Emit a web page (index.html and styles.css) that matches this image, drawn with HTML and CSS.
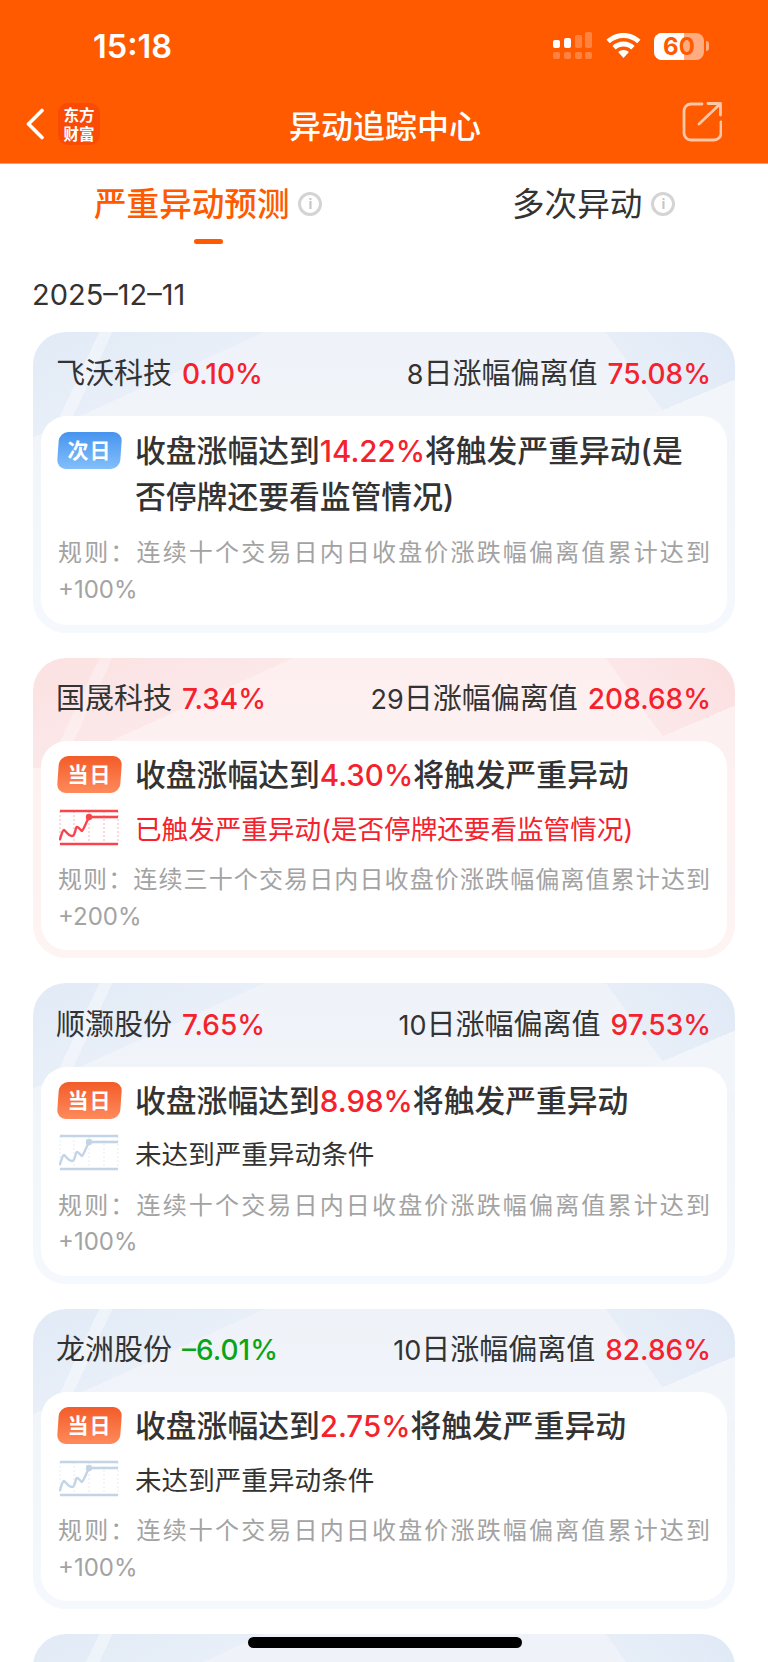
FILE: index.html
```html
<!DOCTYPE html>
<html lang="zh-CN">
<head>
    <meta charset="UTF-8">
    <title>异动追踪中心</title>
    <link rel="stylesheet" href="styles.css">
</head>
<body>
    <div id="page">
        <div id="top">
            <div class="status">
                <span class="time">15:18</span>
                <div class="status-icons">
                    <svg class="signal" width="40" height="28" viewBox="0 0 40 28">
                        <g fill="#fff">
                            <rect x="0" y="8" width="7" height="8" rx="2"/>
                            <rect x="11" y="6" width="7" height="10" rx="2"/>
                        </g>
                        <g fill="#fff" opacity=".25">
                            <rect x="22" y="3" width="7" height="13" rx="2"/>
                            <rect x="32" y="0" width="7" height="16" rx="2"/>
                            <rect x="0" y="20" width="7" height="7" rx="2"/>
                            <rect x="11" y="20" width="7" height="7" rx="2"/>
                            <rect x="22" y="20" width="7" height="7" rx="2"/>
                            <rect x="32" y="20" width="7" height="7" rx="2"/>
                        </g>
                    </svg>
                    <svg class="wifi" width="35" height="26" viewBox="0 0 35 26">
                        <path d="M17.5 0C11 0 5 2.600.5 6.800l3.300 3.500C7.400 7 12.200 5 17.500 5s10.100 2 13.700 5.300l3.300-3.500C30 2.600 24 0 17.500 0z" fill="#fff"/>
                        <path d="M17.500 8.500c-4.300 0-8.200 1.700-11.100 4.400l3.300 3.500c2-1.900 4.800-3 7.800-3s5.800 1.100 7.800 3l3.300-3.500c-2.900-2.700-6.800-4.400-11.100-4.400z" fill="#fff"/>
                        <path d="M17.500 17c-2.100 0-4 .8-5.400 2.100l5.400 6 5.400-6C21.500 17.800 19.600 17 17.500 17z" fill="#fff"/>
                    </svg>
                    <div class="battery">
                        <div class="battery-body"><i></i><span>60</span></div>
                        <div class="battery-tip"></div>
                    </div>
                </div>
            </div>
            <div class="nav">
                <div class="nav-left">
                    <svg class="back" width="20" height="32" viewBox="0 0 20 32">
                        <path d="M17 2.500 3.500 16 17 29.500" fill="none" stroke="#fff" stroke-width="3.600" stroke-linecap="round" stroke-linejoin="round"/>
                    </svg>
                    <div class="logo">东方<br>财富</div>
                </div>
                <div class="nav-title">异动追踪中心</div>
                <svg class="share" width="40" height="40" viewBox="0 0 40 40">
                    <path d="M20 2H9a7 7 0 0 0-7 7v22a7 7 0 0 0 7 7h23a7 7 0 0 0 7-7V20" fill="none" stroke="#ffc6a8" stroke-width="2.800" stroke-linecap="round"/>
                    <path d="M17 22 38 2M26 1.500h12.500V13" fill="none" stroke="#ffc6a8" stroke-width="2.800" stroke-linecap="round" stroke-linejoin="round"/>
                </svg>
            </div>
        </div>

        <div class="tabs">
            <div class="tab on">严重异动预测<span class="info">i</span></div>
            <div class="tab">多次异动<span class="info">i</span></div>
        </div>
        <div class="date">2025–12–11</div>

        <div class="list">
            <div class="card two-line">
                <div class="card-head">
                    <div><span class="name">飞沃科技</span><span class="num up">0.10%</span></div>
                    <div><span class="name"><em>8</em>日涨幅偏离值</span><span class="num up">75.08%</span></div>
                </div>
                <div class="card-body">
                    <div class="title">
                        <span class="tag next">次日</span>
                        <p>收盘涨幅达到<b>14.22%</b>将触发严重异动(是否停牌还要看监管情况)</p>
                    </div>
                    <p class="rule">规则：连续十个交易日内日收盘价涨跌幅偏离值累计达到+100%</p>
                </div>
            </div>

            <div class="card hot">
                <div class="card-head">
                    <div><span class="name">国晟科技</span><span class="num up">7.34%</span></div>
                    <div><span class="name"><em>29</em>日涨幅偏离值</span><span class="num up">208.68%</span></div>
                </div>
                <div class="card-body">
                    <div class="title">
                        <span class="tag">当日</span>
                        <p>收盘涨幅达到<b>4.30%</b>将触发严重异动</p>
                    </div>
                    <div class="state red">
                        <svg class="trend" width="60" height="37" viewBox="0 0 60 37">
                            <use href="#trend-lines"/>
                        </svg>
                        <span>已触发严重异动(是否停牌还要看监管情况)</span>
                    </div>
                    <p class="rule">规则：连续三十个交易日内日收盘价涨跌幅偏离值累计达到+200%</p>
                </div>
            </div>

            <div class="card">
                <div class="card-head">
                    <div><span class="name">顺灏股份</span><span class="num up">7.65%</span></div>
                    <div><span class="name"><em>10</em>日涨幅偏离值</span><span class="num up">97.53%</span></div>
                </div>
                <div class="card-body">
                    <div class="title">
                        <span class="tag">当日</span>
                        <p>收盘涨幅达到<b>8.98%</b>将触发严重异动</p>
                    </div>
                    <div class="state">
                        <svg class="trend" width="60" height="37" viewBox="0 0 60 37">
                            <use href="#trend-lines"/>
                        </svg>
                        <span>未达到严重异动条件</span>
                    </div>
                    <p class="rule">规则：连续十个交易日内日收盘价涨跌幅偏离值累计达到+100%</p>
                </div>
            </div>

            <div class="card">
                <div class="card-head">
                    <div><span class="name">龙洲股份</span><span class="num down">–6.01%</span></div>
                    <div><span class="name"><em>10</em>日涨幅偏离值</span><span class="num up">82.86%</span></div>
                </div>
                <div class="card-body">
                    <div class="title">
                        <span class="tag">当日</span>
                        <p>收盘涨幅达到<b>2.75%</b>将触发严重异动</p>
                    </div>
                    <div class="state">
                        <svg class="trend" width="60" height="37" viewBox="0 0 60 37">
                            <use href="#trend-lines"/>
                        </svg>
                        <span>未达到严重异动条件</span>
                    </div>
                    <p class="rule">规则：连续十个交易日内日收盘价涨跌幅偏离值累计达到+100%</p>
                </div>
            </div>

            <div class="card"></div>
        </div>

        <div class="home-bar"></div>
    </div>

    <!-- 折线小图，颜色跟随 .trend 的 color -->
    <svg width="0" height="0" class="defs">
        <defs>
            <g id="trend-lines">
                <path d="M1 2h58M1 35h58" stroke="currentColor" stroke-width="2.600"/>
                <path d="M1 2v33M15 2v33M30 2v33M45 2v33M59 2v33" stroke="currentColor" stroke-width="1" stroke-dasharray="2 2" opacity=".4"/>
                <path d="M30 8h29" stroke="currentColor" stroke-width="2.600"/>
                <path d="M1 30C3 24 4 21 5 21s4 6 8 6 3-9 5-9 4 4 5 4 4-8 7-14" fill="none" stroke="currentColor" stroke-width="2.400" stroke-linecap="round"/>
                <circle cx="30" cy="8" r="3.200" fill="currentColor"/>
            </g>
        </defs>
    </svg>
</body>
</html>
```

FILE: styles.css
```css
*{
    margin:0;
    padding:0;
    border:0;
    box-sizing:border-box;
}
html,body{
    width:768px;
    height:1662px;
    overflow:hidden;
    background:#fff;
}
body{
    font-family:"Inter","Noto Sans CJK SC",sans-serif;
    color:#333;
}
em,i{
    font-style:normal;
}
b{
    font-weight:500;
}
#page{
    width:768px;
    height:1662px;
    position:relative;
    overflow:hidden;
}
.defs{
    position:absolute;
}

/* 顶部橙色区域 */
#top{
    height:164px;
    background:#ff5a00;
    border-bottom:1px solid #ffa27a;
    color:#fff;
}
.status{
    height:87px;
    display:flex;
    justify-content:space-between;
    align-items:center;
    padding:5px 59px 0 93px;
}
.time{
    font-size:32.500px;
    font-weight:600;
}
.status-icons{
    display:flex;
    align-items:center;
    gap:14px;
}
.signal,.wifi{
    margin-right:-1px;
}
.battery{
    display:flex;
    align-items:center;
    gap:2px;
}
.battery-body{
    width:50px;
    height:27px;
    border-radius:8px;
    background:rgba(255,255,255,.5);
    position:relative;
    overflow:hidden;
    text-align:center;
    color:#ff5a00;
    font-size:24px;
    font-weight:700;
    line-height:27px;
}
.battery-body i{
    position:absolute;
    left:0;
    top:0;
    width:30px;
    height:27px;
    background:#fff;
}
.battery-body span{
    position:relative;
}
.battery-tip{
    width:3px;
    height:10px;
    border-radius:0 3px 3px 0;
    background:rgba(255,255,255,.5);
}
.nav{
    height:74px;
    display:flex;
    align-items:center;
    justify-content:space-between;
    padding:0 46px 0 25px;
    position:relative;
}
.nav-left{
    display:flex;
    align-items:center;
    gap:13px;
}
.logo{
    width:42px;
    height:42px;
    border-radius:10px;
    background:#f94a06;
    font-family:"Noto Sans CJK SC",sans-serif;
    font-size:15.500px;
    font-weight:700;
    line-height:19px;
    text-align:center;
    padding-top:2px;
}
.nav-title{
    position:absolute;
    left:2px;
    right:0;
    text-align:center;
    font-size:32px;
    font-weight:500;
    pointer-events:none;
}
.share{
    margin-bottom:4px;
}

/* 两个标签 */
.tabs{
    height:112px;
    display:flex;
    padding-top:11px;
}
.tab{
    position:relative;
    display:flex;
    align-items:flex-start;
    height:60px;
    font-size:32.600px;
    line-height:58px;
}
.tab:first-child{
    margin-left:94px;
    width:418px;
}
.tab.on{
    color:#ff5a00;
    font-weight:500;
}
.tab.on:after{
    content:"";
    position:absolute;
    left:100px;
    bottom:-9px;
    width:29px;
    height:5px;
    border-radius:3px;
    background:#ff5a00;
}
.info{
    width:24px;
    height:24px;
    margin:17px 0 0 9px;
    border:3px solid #d4d4d4;
    border-radius:50%;
    color:#c6c6c6;
    font-size:14px;
    font-weight:700;
    line-height:18px;
    text-align:center;
}
.date{
    height:38px;
    padding-left:32px;
    font-size:29px;
    line-height:38px;
    color:#333;
}

/* 列表 */
.list{
    margin-top:18px;
    padding:0 33px;
    display:flex;
    flex-direction:column;
    gap:25px;
}
.card{
    flex:none;
    height:300.500px;
    border-radius:33px;
    padding:0 8px;
    display:flex;
    flex-direction:column;
    background-image:
        linear-gradient(157deg,transparent 318px,#f2f5fa 318px),
        linear-gradient(54deg,transparent 528px,rgba(218,230,245,.4) 528px,rgba(218,230,245,.75) 100%),
        linear-gradient(115deg,transparent 60px,rgba(255,255,255,.4) 60px,rgba(255,255,255,.4) 72px,transparent 72px),
        linear-gradient(155.500deg,#e1eaf6 0,#e8eff8 96px,transparent 96px),
        linear-gradient(180deg,#eff3f9 0,#f5f8fc 100%);
    background-size:100% 110px,100% 110px,100% 110px,100% 110px,100% 100%;
    background-repeat:no-repeat;
}
.card.hot{
    background-image:
        linear-gradient(157deg,transparent 318px,#fdf0f0 318px),
        linear-gradient(54deg,transparent 528px,rgba(250,216,218,.35) 528px,rgba(250,216,218,.7) 100%),
        linear-gradient(115deg,transparent 60px,rgba(255,255,255,.3) 60px,rgba(255,255,255,.3) 72px,transparent 72px),
        linear-gradient(155.500deg,#fbe1e2 0,#fce8e9 108px,transparent 108px),
        linear-gradient(180deg,#fdeff0 0,#fef4f4 100%);
}
.card-head{
    flex:none;
    height:83.500px;
    padding:0 16px 6px 15px;
    display:flex;
    justify-content:space-between;
    align-items:center;
    font-size:29px;
}
.name{
    color:#333;
}
.name em{
    font-size:27px;
}
.num{
    margin-left:10px;
    font-size:28px;
    font-weight:500;
}
.up{
    color:#f5222d;
}
.down{
    color:#0aa517;
}
.card-body{
    flex:none;
    height:209px;
    background:#fff;
    border-radius:26px;
    padding:0 17px 4px;
    display:flex;
    flex-direction:column;
    justify-content:center;
}
.title{
    display:flex;
    align-items:flex-start;
    font-size:30.800px;
    font-weight:500;
    line-height:45px;
}
.title p{
    padding-right:12px;
}
.title b{
    font-size:29.500px;
    color:#f5222d;
}
/* 斜切的底色单独放一层，文字不跟着歪 */
.tag{
    flex:none;
    width:63px;
    height:37px;
    margin:4px 14px 0 0;
    position:relative;
    isolation:isolate;
    color:#fff;
    font-size:21px;
    font-weight:700;
    line-height:37px;
    text-align:center;
    letter-spacing:1px;
}
.tag:before{
    content:"";
    position:absolute;
    inset:0;
    z-index:-1;
    border-radius:9px;
    transform:skewX(-4deg);
    background:linear-gradient(180deg,#f25c29,#ff8a5b);
}
.tag.next:before{
    background:linear-gradient(180deg,#4794ee,#82bffb);
}
.state{
    display:flex;
    align-items:center;
    height:44px;
    margin-top:7px;
    font-size:26.600px;
    color:#333;
}
.state .trend{
    color:#c3d4e7;
    margin:0 16px 0 1px;
    flex:none;
}
.state.red{
    color:#f5222d;
}
.state.red .trend{
    color:#f9444c;
}
.rule{
    margin-top:13px;
    font-size:24px;
    line-height:36.500px;
    color:#a3a3a3;
    text-align:justify;
}
.two-line .rule{
    margin-top:16px;
}

.home-bar{
    position:absolute;
    left:248px;
    top:1637px;
    width:274px;
    height:11px;
    border-radius:6px;
    background:#000;
}
```
